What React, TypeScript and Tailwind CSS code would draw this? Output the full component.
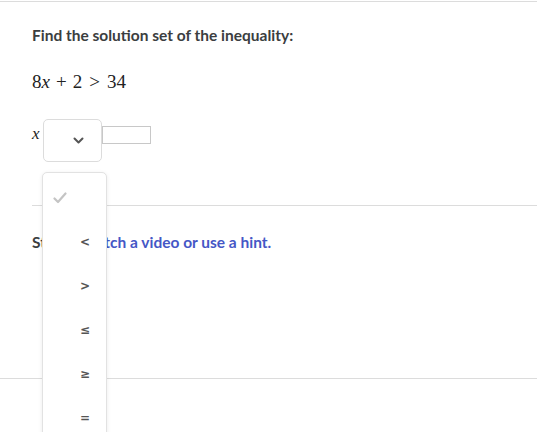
import React from "react";

const Check = () => (
  <svg width="14" height="12" viewBox="0 0 14 12" fill="none">
    <path d="M1.5 6.5 L5 10 L12.5 1.5" stroke="#c4c4c4" strokeWidth="2.2" strokeLinecap="round" strokeLinejoin="round" />
  </svg>
);

const Chevron = () => (
  <svg width="11" height="7" viewBox="0 0 11 7" fill="none">
    <path d="M1.5 1.5 L5.5 5.5 L9.5 1.5" stroke="#555" strokeWidth="2" strokeLinecap="round" strokeLinejoin="round" />
  </svg>
);

export default function App() {
  const items = ["<", ">", "≤", "≥", "="];
  return (
    <div className="relative w-full h-[432px] overflow-hidden bg-white" style={{ fontFamily: "Lato, 'Open Sans', sans-serif" }}>
      <div className="h-px mt-px bg-[#dcdcdc]" />
      <div className="pl-8 pt-[23px]">
        <div className="text-[15.5px] leading-5 font-bold text-[#3b3e40]">Find the solution set of the inequality:</div>
        <div className="mt-[25px] text-[19px] leading-6 text-[#222] flex items-center" style={{ fontFamily: "'Liberation Serif', serif" }}>
          <span>8</span><i>x</i>
          <span className="mx-[6px]">+</span>
          <span>2</span>
          <span className="mx-[7px]">&gt;</span>
          <span>34</span>
        </div>
        <div className="mt-[25px] flex items-start">
          <div className="w-[11px] pt-[5px] text-[17px] leading-5 italic text-[#222]" style={{ fontFamily: "'Liberation Serif', serif" }}>x</div>
          <div className="w-[59px] h-[43px] rounded-[5px] border border-[#dcdcdc] flex items-center justify-end pr-[17px]">
            <Chevron />
          </div>
          <div className="mt-[7px] w-[49px] h-[18px] border border-[#c8c8c8]" />
        </div>
        <div className="mt-[43px] h-px bg-[#dcdcdc]" />
        <div className="mt-[26px] text-[15.5px] leading-5 font-bold text-[#3b3e40]">
          Stuck? <span className="text-[#4557c6]">Watch a video or use a hint.</span>
        </div>
        <div className="mt-[126px] -ml-8 h-px bg-[#dcdcdc]" />
      </div>

      <div className="absolute left-[42px] top-[172px] w-[65px] h-[300px] rounded-[5px] border border-[#e2e2e2] bg-white shadow-[0_1px_4px_rgba(0,0,0,0.08)] pt-[3px]">
        <div className="h-[44px] flex items-center pl-[10px]">
          <Check />
        </div>
        {items.map((it) => (
          <div key={it} className="h-[44px] flex items-center pl-[37px] text-[12px] font-bold text-[#555]" style={{ fontFamily: "'DejaVu Sans', sans-serif" }}>
            {it}
          </div>
        ))}
      </div>
    </div>
  );
}
